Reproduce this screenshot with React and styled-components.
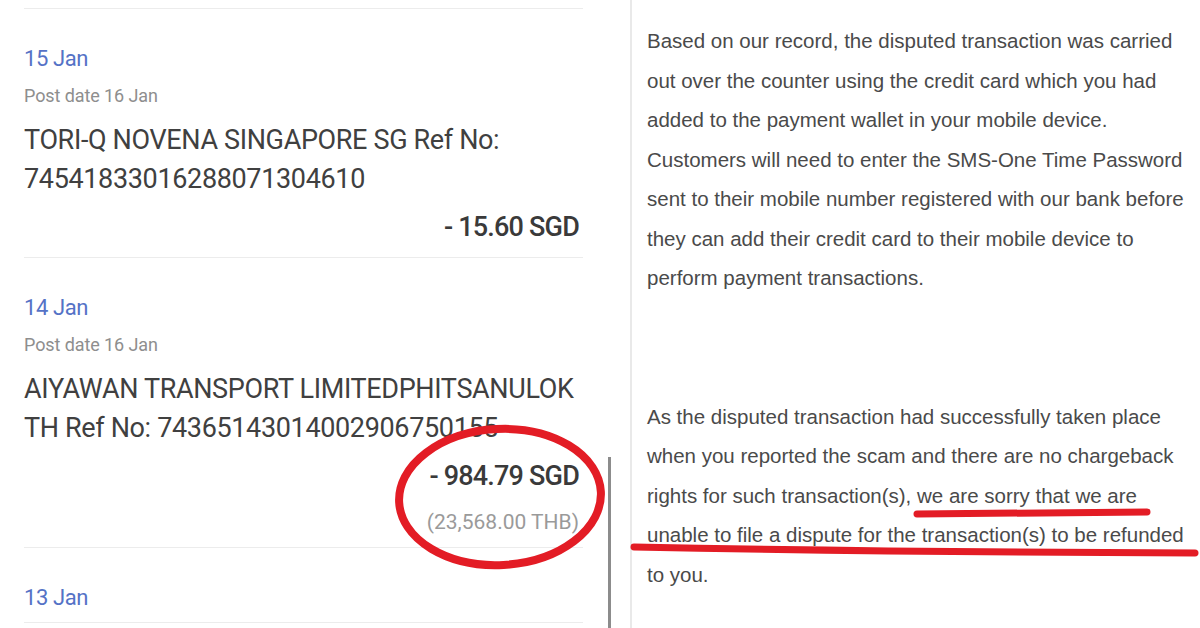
import React from "react";
import styled, { createGlobalStyle } from "styled-components";

const GlobalStyle = createGlobalStyle`
  html, body {
    margin: 0;
    padding: 0;
    background: #ffffff;
  }
  body {
    overflow: hidden;
  }
`;

const Page = styled.div`
  position: relative;
  display: flex;
  width: 1200px;
  height: 628px;
  overflow: hidden;
  background: #ffffff;
`;

const LeftPanel = styled.div`
  position: relative;
  flex: none;
  width: 630px;
  box-sizing: border-box;
  padding: 8px 47px 0 24px;
  font-family: Roboto, "Noto Sans", sans-serif;
  overflow: hidden;
`;

const Rule = styled.div`
  height: 1px;
  background: #ececec;
`;

const Item = styled.div`
  padding: 37px 0 11px;
  border-bottom: 1px solid #ececec;
`;

const DateLine = styled.div`
  font-size: 22px;
  line-height: 26px;
  letter-spacing: -0.4px;
  color: #5572c6;
`;

const PostDate = styled.div`
  margin-top: 13px;
  font-size: 18px;
  line-height: 22px;
  letter-spacing: -0.1px;
  color: #8e8e8e;
`;

const Desc = styled.div`
  margin-top: 14px;
  font-size: 27px;
  line-height: 39px;
  letter-spacing: -0.35px;
  color: #404040;
`;

const Line = styled.span`
  display: block;
  white-space: nowrap;
`;

const Amount = styled.div`
  margin-top: 9px;
  padding-right: 4px;
  text-align: right;
  font-size: 27px;
  line-height: 38px;
  font-weight: 500;
  letter-spacing: -0.8px;
  color: #3a3a3a;
`;

const Foreign = styled.div`
  margin-top: 13px;
  padding-right: 4px;
  text-align: right;
  font-size: 21px;
  line-height: 28px;
  color: #9a9a9a;
`;

const ScrollThumb = styled.div`
  position: absolute;
  left: 608px;
  top: 457px;
  bottom: 0;
  width: 3px;
  background: #8c8c8c;
`;

const RightPanel = styled.div`
  flex: 1;
  border-left: 2px solid #e9e9e9;
  padding: 21px 0 0 15px;
  font-family: "Liberation Sans", Arial, sans-serif;
  font-size: 20.5px;
  line-height: 39.5px;
  color: #4a4a4a;
`;

const Para = styled.div`
  margin-top: ${(p) => p.$gap || 0}px;
`;

const Marks = styled.svg`
  position: absolute;
  inset: 0;
  pointer-events: none;
`;

const items = [
  {
    date: "15 Jan",
    post: "Post date 16 Jan",
    desc: ["TORI-Q NOVENA SINGAPORE SG Ref No:", "74541833016288071304610"],
    amount: "- 15.60 SGD",
  },
  {
    date: "14 Jan",
    post: "Post date 16 Jan",
    desc: ["AIYAWAN TRANSPORT LIMITEDPHITSANULOK", "TH Ref No: 74365143014002906750155"],
    amount: "- 984.79 SGD",
    foreign: "(23,568.00 THB)",
  },
  {
    date: "13 Jan",
  },
];

const letter = [
  [
    "Based on our record, the disputed transaction was carried",
    "out over the counter using the credit card which you had",
    "added to the payment wallet in your mobile device.",
    "Customers will need to enter the SMS-One Time Password",
    "sent to their mobile number registered with our bank before",
    "they can add their credit card to their mobile device to",
    "perform payment transactions.",
  ],
  [
    "As the disputed transaction had successfully taken place",
    "when you reported the scam and there are no chargeback",
    "rights for such transaction(s), we are sorry that we are",
    "unable to file a dispute for the transaction(s) to be refunded",
    "to you.",
  ],
];

const App = () => {
  return (
    <Page>
      <GlobalStyle />
      <LeftPanel>
        <Rule />
        {items.map((it) => (
          <Item key={it.date}>
            <DateLine>{it.date}</DateLine>
            {it.post && <PostDate>{it.post}</PostDate>}
            {it.desc && (
              <Desc>
                {it.desc.map((l, i) => (
                  <Line key={i}>{l}</Line>
                ))}
              </Desc>
            )}
            {it.amount && <Amount>{it.amount}</Amount>}
            {it.foreign && <Foreign>{it.foreign}</Foreign>}
          </Item>
        ))}
        <ScrollThumb />
      </LeftPanel>
      <RightPanel>
        {letter.map((para, i) => (
          <Para key={i} $gap={i ? 99 : 0}>
            {para.map((l) => (
              <Line key={l}>{l}</Line>
            ))}
          </Para>
        ))}
      </RightPanel>
      <Marks width="1200" height="628" viewBox="0 0 1200 628">
        <ellipse
          cx="500"
          cy="497"
          rx="101"
          ry="68"
          transform="rotate(-3 500 497)"
          fill="none"
          stroke="#e31c25"
          strokeWidth="8"
        />
        <path
          d="M917 514 L1147 512"
          stroke="#e31c25"
          strokeWidth="7"
          strokeLinecap="round"
          fill="none"
        />
        <path
          d="M634 547 Q900 552 1195 553"
          stroke="#e31c25"
          strokeWidth="7"
          strokeLinecap="round"
          fill="none"
        />
      </Marks>
    </Page>
  );
};

export default App;
